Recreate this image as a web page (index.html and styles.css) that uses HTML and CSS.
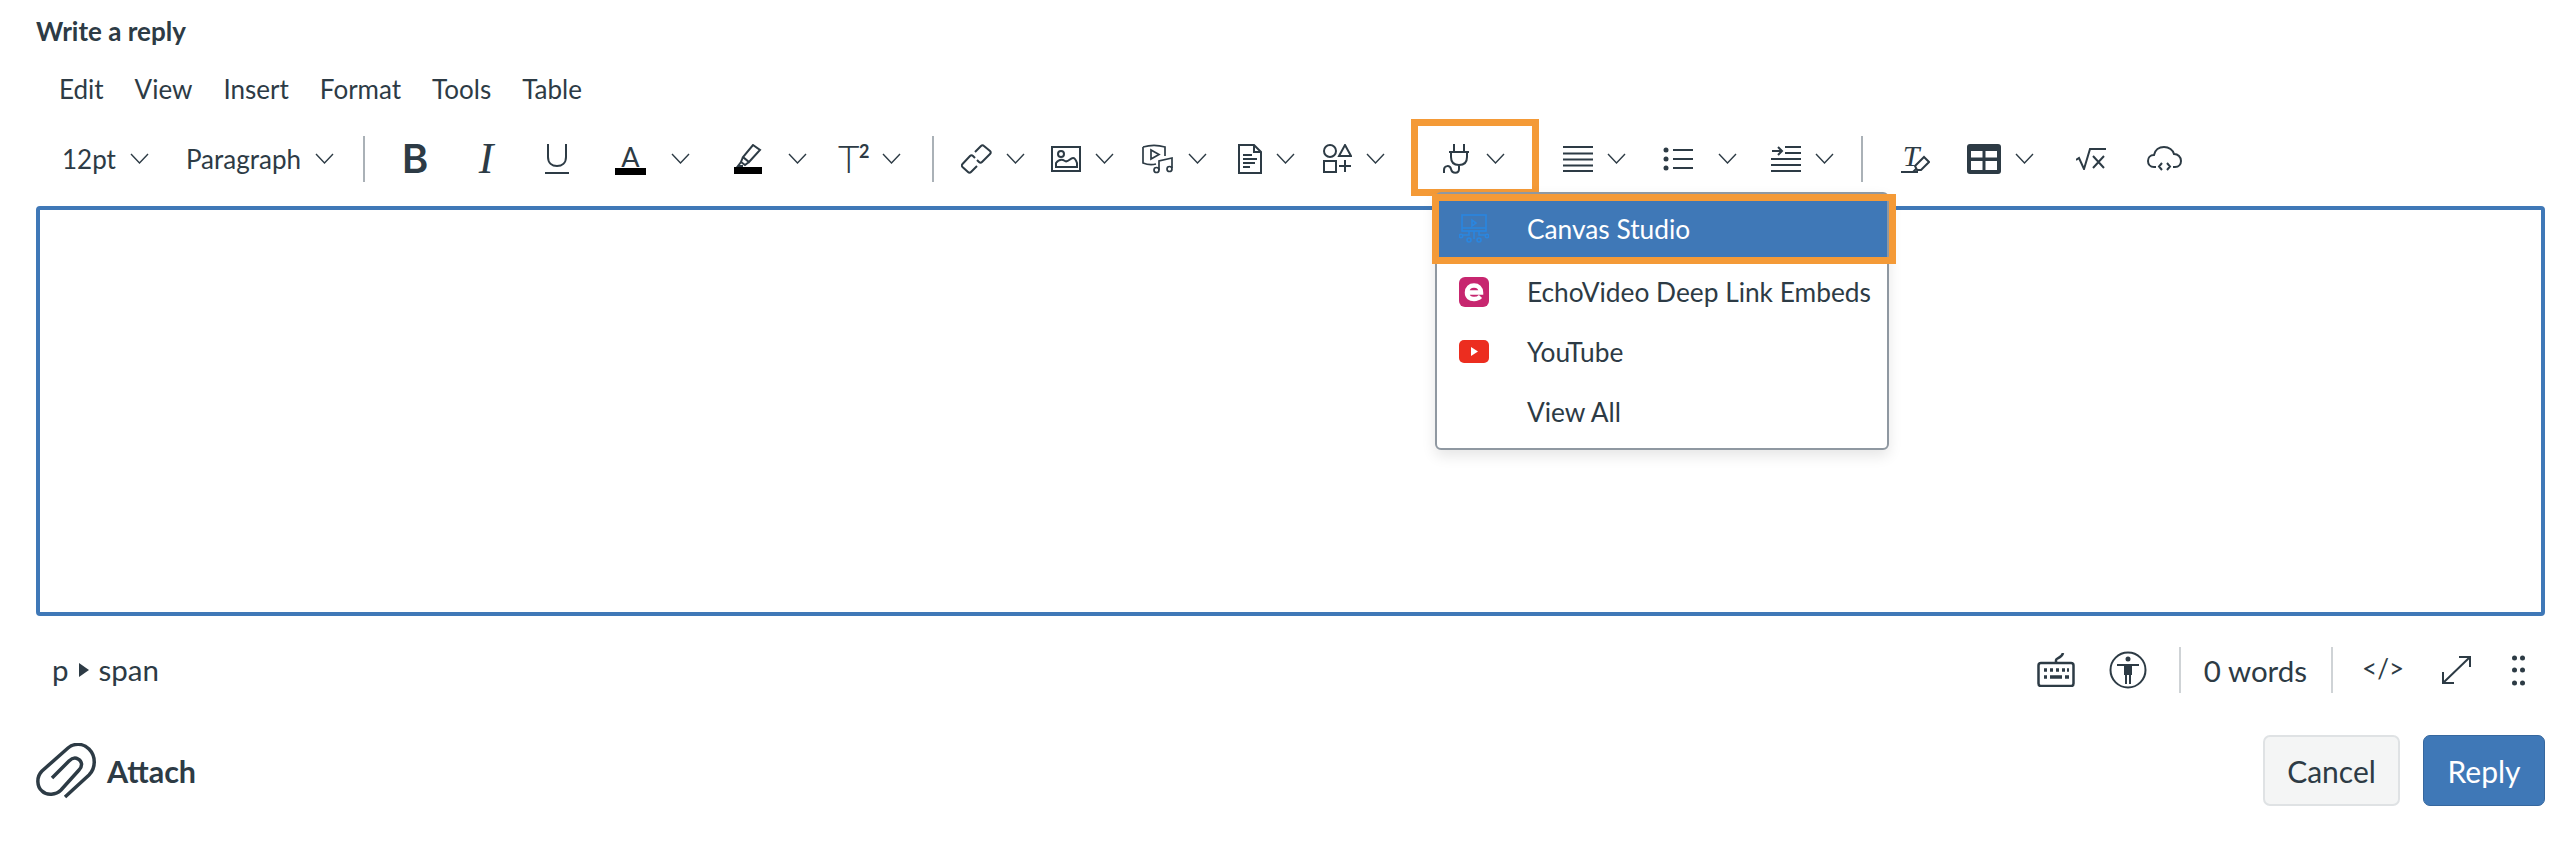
FILE: index.html
```html
<!DOCTYPE html>
<html lang="en">
<head>
<meta charset="utf-8">
<title>Write a reply</title>
<link rel="stylesheet" href="styles.css">
</head>
<body>
<svg class="defs" width="0" height="0"><defs><symbol id="chev" viewBox="0 0 19 11"><polyline points="1,1 9.5,10 18,1"/></symbol></defs></svg>
<main class="page">
  <div class="label">Write a reply</div>
  <nav class="menubar"><span>Edit</span><span>View</span><span>Insert</span><span>Format</span><span>Tools</span><span>Table</span></nav>
  <div class="toolbar">
    <div class="tool txt"><span class="size">12pt</span><svg class="chev"><use href="#chev"/></svg></div>
    <div class="tool txt m37"><span class="para">Paragraph</span><svg class="chev"><use href="#chev"/></svg></div>
    <i class="sep m29"></i>
    <div class="tool m37"><span class="g g-b">B</span></div>
    <div class="tool m49"><span class="g g-i">I</span></div>
    <div class="tool m49"><svg class="ic line" width="24" height="30"><path d="M3 0V13C3 19 7 22 12 22S21 19 21 13V0M0 29H24"/></svg></div>
    <div class="tool m46"><span class="g g-a">A</span><svg class="chev gap-a"><use href="#chev"/></svg></div>
    <div class="tool m44"><svg class="ic line" width="28" height="30"><path d="M19 1 26 6 15 18 9 13ZM9 13 7 18 11 21 15 18M7 18 4 22H9"/><rect class="fill-k" y="23" width="28" height="7"/></svg><svg class="chev gap-h"><use href="#chev"/></svg></div>
    <div class="tool m31"><span class="g g-t">T<sup class="g-s">2</sup></span><svg class="chev gap-s"><use href="#chev"/></svg></div>
    <i class="sep m31"></i>
    <div class="tool m27"><svg class="ic line" width="31" height="30"><path d="M14 8 20 2C21 1 22 1 23 2L29 7C30 8 30 9 29 10L21 18C20 19 19 19 18 18L16 16"/><path d="M16 22 10 28C9 29 8 29 7 28L1.500 23C.5 22 .5 21 1.500 20L9 12C10 11 11 11 12 12L14 14"/></svg><svg class="chev"><use href="#chev"/></svg></div>
    <div class="tool m26"><svg class="ic line" width="30" height="26"><rect x="1" y="1" width="28" height="24"/><circle cx="10" cy="8" r="3"/><path d="M5 21V17C8 13 11 13 14 15 17 17 19 12 22 12 24 12 25 14 26 17V21Z"/></svg><svg class="chev"><use href="#chev"/></svg></div>
    <div class="tool m28"><svg class="ic line thin" width="32" height="30"><path d="M1 3C8 1 16 1 23 3V12M1 3V19C6 21 10 21 14 20"/><path d="M9 6V15L17 10.500Z"/><path d="M17 26V17L30 14V24"/><circle cx="14.500" cy="26" r="2.500"/><circle cx="27.500" cy="25" r="2.500"/></svg><svg class="chev"><use href="#chev"/></svg></div>
    <div class="tool m31"><svg class="ic line" width="24" height="30"><path d="M1 1H16L23 8V29H1ZM16 1V8H23"/><path d="M5 11H14M5 15H19M5 19H17M5 23H12"/></svg><svg class="chev"><use href="#chev"/></svg></div>
    <div class="tool m28"><svg class="ic line" width="29" height="29"><circle cx="7" cy="7" r="6"/><path d="M22 1 28 12H16ZM1 17H13V28H1ZM22 16V28M16 22H28"/></svg><svg class="chev"><use href="#chev"/></svg></div>
    <div class="tool m58 plug">
      <svg class="ic line" width="27" height="31"><path d="M11 1V9M21 1V9M6 9H26M8 9V14C8 19 11 22 16 22S24 19 24 14V9M16 22V26C16 31 9 31 8 26 7 22 1 22 1 27V30"/></svg><svg class="chev"><use href="#chev"/></svg>
      <div class="menu">
        <div class="item active"><svg class="logo studio" width="30" height="30"><rect x="3" y="1" width="24" height="16"/><path d="M13 6V12L17 9ZM3 14H27M10 17V21H3M15 17V25M20 17V21H27"/><circle cx="2" cy="22" r="1.700"/><circle cx="28" cy="22" r="1.700"/><circle cx="10" cy="26" r="2"/><circle cx="20" cy="26" r="2"/></svg><span>Canvas Studio</span></div>
        <div class="item"><svg class="logo" width="30" height="30"><rect class="echo" width="30" height="30" rx="6"/><path class="echo-e" d="M8 15.500H22C22 11 19 8.500 15 8.500S8 11 8 15.500 11 22 15 22C18 22 20 21 21.500 19.500"/></svg><span>EchoVideo Deep Link Embeds</span></div>
        <div class="item"><svg class="logo" width="30" height="30"><rect class="yt" y="3" width="30" height="23" rx="5"/><path class="yt-p" d="M12 10V19L19 14.500Z"/></svg><span>YouTube</span></div>
        <div class="item"><span class="logo-space"></span><span>View All</span></div>
      </div>
    </div>
    <div class="tool m58"><svg class="ic line" width="30" height="26"><path d="M0 1H30M0 7.500H30M0 13.500H30M0 19.500H30M0 25H30"/></svg><svg class="chev"><use href="#chev"/></svg></div>
    <div class="tool m37"><svg class="ic line" width="30" height="24"><path d="M10 3H30M10 12H30M10 21H30"/><circle class="fill-d" cx="3" cy="3" r="2.500"/><circle class="fill-d" cx="3" cy="12" r="2.500"/><circle class="fill-d" cx="3" cy="21" r="2.500"/></svg><svg class="chev gap-l"><use href="#chev"/></svg></div>
    <div class="tool m34"><svg class="ic line" width="30" height="26"><path d="M14 1H30M14 7H30M0 13H30M0 19H30M0 25H30M1 5H10M7 1 11 5 7 9"/></svg><svg class="chev"><use href="#chev"/></svg></div>
    <i class="sep m27"></i>
    <div class="tool m38 clear"><span class="g g-c">T</span><svg class="ic eraser" width="29" height="26"><path class="stroke" d="M0 25H17M14 19 23 10 28 15 20 23H16ZM12 25 16 21"/></svg></div>
    <div class="tool m37"><svg class="ic" width="34" height="30"><rect class="fill-d" width="34" height="30" rx="3"/><path class="cell" d="M4 7H15.500V13.500H4ZM18.500 7H30V13.500H18.500ZM4 17H15.500V26H4ZM18.500 17H30V26H18.500Z"/></svg><svg class="chev"><use href="#chev"/></svg></div>
    <div class="tool m42"><svg class="ic line" width="30" height="22"><path d="M0 12 3 10 8 21 14 1H30M17 8 28 20M28 8 17 20"/></svg></div>
    <div class="tool m41"><svg class="ic line" width="35" height="26"><path d="M9 21H7C3 21 1 18 1 15 1 12 3 9 7 9 8 4 12 1 17 1 22 1 26 4 27 8 31 8 34 11 34 15 34 18 32 21 28 21H26M15 17 12 20.500 15 24M20 17 23 20.500 20 24"/></svg></div>
  </div>
  <div class="editor"></div>
  <div class="status">
    <div class="path">p<svg class="crumb" width="10" height="14"><path class="fill-d" d="M0 0 10 7 0 14Z"/></svg>span</div>
    <div class="status-right">
      <svg class="ic line kbd" width="38" height="34"><rect x="1.500" y="10" width="35" height="23" rx="2.500"/><path d="M19 10V7C19 5 25 5 26 0"/><path class="keys" d="M7 17H10M13 17H16M19 17H22M25 17H28M30 17H32M7 24H10M13 24H25M28 24H32"/></svg>
      <svg class="ic line a11y" width="38" height="38"><circle cx="19" cy="19" r="17.500"/><circle class="fill-d" cx="19" cy="8" r="2.500"/><path class="fill-d" d="M8 13H30V15H23V24 H22V33H20V24H18V33H16V24H15V15H8Z"/></svg>
      <i class="sep short"></i>
      <span class="words">0 words</span>
      <i class="sep short"></i>
      <span class="code">&lt;/&gt;</span>
      <svg class="ic line expand" width="29" height="28"><path d="M1 27 28 1M17 1H28V11M1 16V27H12"/></svg>
      <svg class="ic dots" width="13" height="31"><circle cx="2.500" cy="3" r="2.500"/><circle cx="10.500" cy="3" r="2.500"/><circle cx="2.500" cy="15" r="2.500"/><circle cx="10.500" cy="15" r="2.500"/><circle cx="2.500" cy="28" r="2.500"/><circle cx="10.500" cy="28" r="2.500"/></svg>
    </div>
  </div>
  <div class="footer">
    <div class="attach"><svg class="clip" width="60" height="56"><path d="M29 54 53 32C60 25 60 13 53 6 47 0 38 0 32 5L6 28C0 34 1 44 6 48 11 53 20 52 25 47L43 27C47 23 46 18 42 16 39 14 36 15 33 18L16 35"/></svg><span>Attach</span></div>
    <div class="actions"><button class="btn cancel">Cancel</button><button class="btn reply">Reply</button></div>
  </div>
</main>
</body>
</html>
```
FILE: styles.css
```css
* { box-sizing: border-box; }
html, body { margin: 0; background: #fff; }
body { font-family: Lato, "Open Sans", sans-serif; color: #2d3b45; overflow: hidden; }
.defs { position: absolute; }
.page { width: 2560px; height: 844px; padding: 0 15px 0 36px; display: flex; flex-direction: column; }
.label { height: 64px; line-height: 62px; font-size: 26px; font-weight: 700; }
.menubar { height: 50px; display: flex; align-items: center; gap: 31px; padding-left: 23px; font-size: 26px; }
.toolbar { height: 88px; display: flex; align-items: center; padding: 1px 0 0 26px; margin-bottom: 4px; }
.tool { display: flex; align-items: center; gap: 14px; flex: none; }
.txt { font-size: 26px; }
.ic { display: block; flex: none; }
.chev { width: 19px; height: 11px; flex: none; margin-top: -1px; fill: none; stroke: #2d3b45; stroke-width: 1.4; }
.gap-a { margin-left: 11px; }
.gap-s { margin-left: -1px; }
.gap-h { margin-left: 12px; }
.gap-l { margin-left: 11px; }
.line { fill: none; stroke: #2d3b45; stroke-width: 2; }
.thin { stroke-width: 1.7; }
.stroke { fill: none; stroke: #2d3b45; stroke-width: 2; }
.fill-k { fill: #000; stroke: none; }
.fill-d { fill: #2d3b45; stroke: none; }
.cell { fill: #fff; }
.sep { display: block; flex: none; width: 2px; height: 46px; background: #aab1b7; }
.sep.short { background: #cfd3d6; }
.m26 { margin-left: 26px; } .m27 { margin-left: 27px; } .m28 { margin-left: 28px; }
.m29 { margin-left: 29px; } .m31 { margin-left: 31px; } .m34 { margin-left: 34px; }
.m37 { margin-left: 37px; } .m38 { margin-left: 38px; } .m41 { margin-left: 41px; }
.m42 { margin-left: 42px; } .m44 { margin-left: 44px; } .m46 { margin-left: 46px; }
.m49 { margin-left: 49px; } .m58 { margin-left: 58px; }
.g { display: block; flex: none; height: 36px; line-height: 36px; text-align: center; }
.g-b { width: 25px; font: 600 40px/36px Inter, sans-serif; }
.g-i { width: 20px; font: italic 400 44px/36px "Liberation Serif", serif; }
.g-a { width: 31px; height: 30px; margin-top: 2px; font: 400 27px/24px Lato, sans-serif; border-bottom: 7px solid #000; }
.g-t { width: 31px; font: 300 37px/36px Lato, sans-serif; text-align: left; position: relative; white-space: nowrap; }
.g-s { position: absolute; left: 21px; top: -5px; font: 700 18px/30px Lato, sans-serif; vertical-align: baseline; }
.clear { position: relative; width: 29px; height: 30px; }
.g-c { width: 20px; font: italic 400 30px/30px "Liberation Serif", serif; }
.eraser { position: absolute; left: 0; top: 3px; }
.plug { position: relative; gap: 16px; }
.plug::after { content: ""; position: absolute; left: -32px; right: -34px; top: -24px; bottom: -22px; border: 7px solid #f49a37; pointer-events: none; }
.menu { position: absolute; z-index: 2; left: -8px; top: 49px; width: 454px; height: 258px; padding: 8px 0; background: #fff; border: 2px solid #8f98a1; border-radius: 6px; box-shadow: 0 6px 14px rgba(0,0,0,.1); }
.item { position: relative; height: 60px; display: flex; align-items: center; padding-left: 22px; gap: 38px; font-size: 26.3px; white-space: nowrap; }
.active { background: #3f78b7; color: #fff; height: 56px; margin-top: -1px; margin-bottom: 5px; }
.active::after { content: ""; position: absolute; z-index: 3; left: -5px; right: -9px; top: -7px; bottom: -7px; border: 7px solid #f49a37; }
.logo { display: block; flex: none; }
.logo-space { width: 30px; flex: none; }
.studio { fill: none; stroke: #2a86e0; stroke-width: 1.6; }
.echo { fill: #c7266f; }
.echo-e { fill: none; stroke: #fff; stroke-width: 4.5; }
.yt { fill: #ec2d1f; }
.yt-p { fill: #fff; }
.editor { height: 410px; flex: none; border: 4px solid #3f78b7; border-radius: 4px; }
.status { height: 108px; flex: none; display: flex; justify-content: space-between; align-items: center; padding: 0 20px 0 16px; }
.path { display: flex; align-items: center; gap: 10px; font-size: 29.5px; margin-top: -2px; }
.crumb { margin-top: 1px; }
.status-right { display: flex; align-items: center; }
.kbd { stroke-width: 2.5; }
.keys { stroke-width: 3.5; }
.status-right .ic + .a11y { margin-left: 34px; }
.status-right .a11y + .sep { margin-left: 32px; }
.words { font-size: 29.5px; margin-left: 23px; margin-right: 24px; }
.code { font-size: 26px; margin-left: 29px; margin-top: -4px; }
.expand { margin-left: 38px; }
.dots { margin-left: 41px; fill: #2d3b45; }
.footer { display: flex; justify-content: space-between; align-items: center; padding-top: 11px; }
.attach { display: flex; align-items: center; gap: 11px; font-size: 30.5px; font-weight: 700; }
.clip { fill: none; stroke: #2d3b45; stroke-width: 3.5; }
.actions { display: flex; gap: 23px; }
.btn { height: 71px; font: 400 30px Lato, sans-serif; border-radius: 7px; padding: 0; }
.cancel { width: 137px; color: #2d3b45; background: #f4f5f5; border: 2px solid #dfe2e4; }
.reply { width: 122px; color: #fff; background: #3f78b7; border: 1px solid #36679e; }
```
